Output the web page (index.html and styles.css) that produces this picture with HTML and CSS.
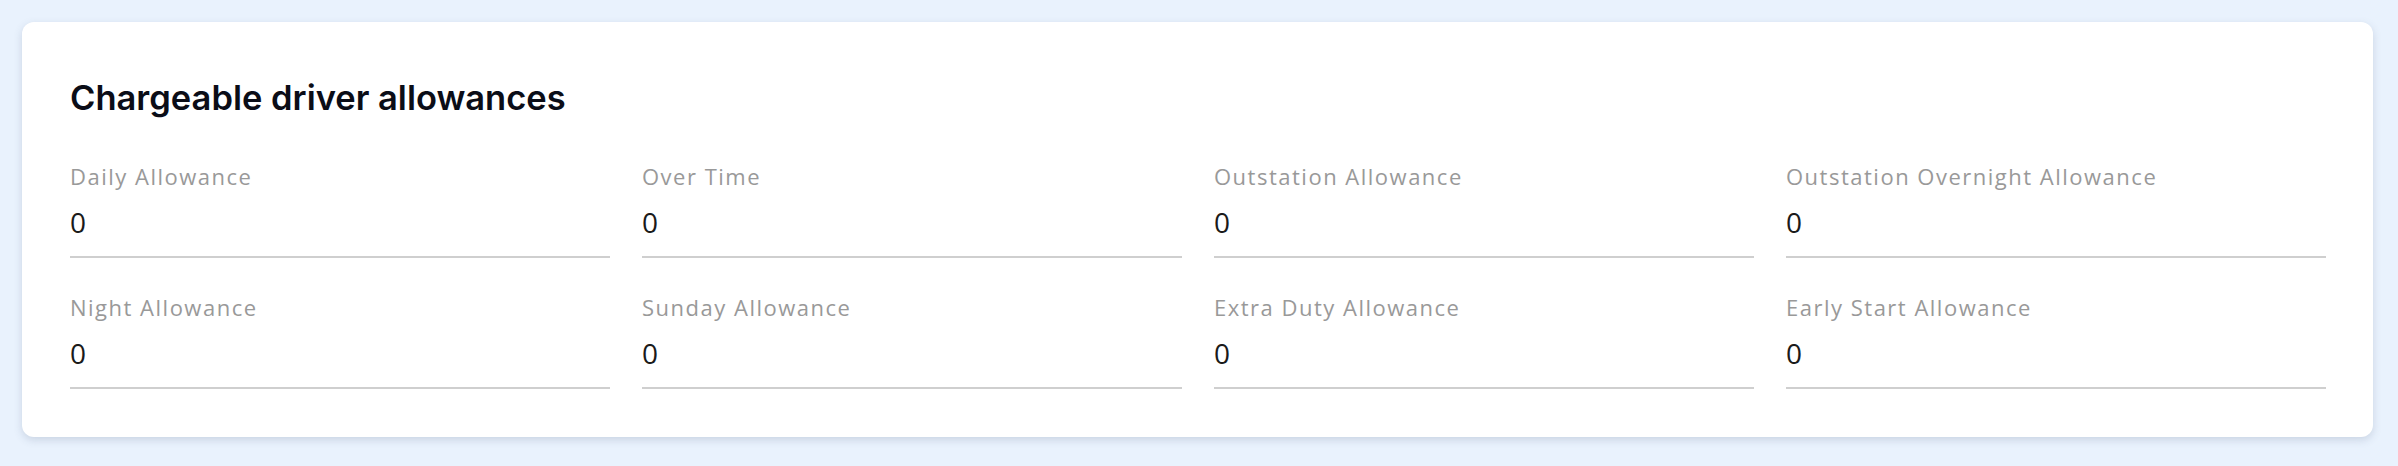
FILE: index.html
```html
<!DOCTYPE html>
<html lang="en">
<head>
    <meta charset="UTF-8">
    <meta name="viewport" content="width=device-width, initial-scale=1.0">
    <title>Chargeable driver allowances</title>
    <link rel="stylesheet" href="styles.css">
</head>
<body>
    <div class="card">
        <h2 class="card-title">Chargeable driver allowances</h2>

        <div class="fields">
            <div class="field">
                <div class="field-label">Daily Allowance</div>
                <div class="field-value">0</div>
            </div>
            <div class="field">
                <div class="field-label">Over Time</div>
                <div class="field-value">0</div>
            </div>
            <div class="field">
                <div class="field-label">Outstation Allowance</div>
                <div class="field-value">0</div>
            </div>
            <div class="field">
                <div class="field-label">Outstation Overnight Allowance</div>
                <div class="field-value">0</div>
            </div>
            <div class="field">
                <div class="field-label">Night Allowance</div>
                <div class="field-value">0</div>
            </div>
            <div class="field">
                <div class="field-label">Sunday Allowance</div>
                <div class="field-value">0</div>
            </div>
            <div class="field">
                <div class="field-label">Extra Duty Allowance</div>
                <div class="field-value">0</div>
            </div>
            <div class="field">
                <div class="field-label">Early Start Allowance</div>
                <div class="field-value">0</div>
            </div>
        </div>
    </div>
</body>
</html>
```

FILE: styles.css
```css
body {
    margin: 0;
    padding: 22px 25px 29px 22px;
    background: #e9f2fd;
    font-family: "Open Sans", Arial, sans-serif;
}
.card {
    background: white;
    border-radius: 12px;
    padding: 56px 47px 48px 48px;
    box-shadow: 0 3px 8px rgba(60, 80, 110, 0.18);
}
.card-title {
    margin: 0 0 46px;
    font-family: Inter, "Liberation Sans", sans-serif;
    font-size: 34.5px;
    line-height: 40px;
    font-weight: 600;
    color: #0b0d17;
}
.fields {
    display: grid;
    grid-template-columns: repeat(4, 1fr);
    column-gap: 32px;
    row-gap: 37px;
}
.field {
    border-bottom: 2px solid #cfcfcf;
}
.field-label {
    font-size: 22px;
    line-height: 24px;
    letter-spacing: 1.5px;
    color: #999;
}
.field-value {
    margin-top: 17px;
    padding-bottom: 17px;
    font-size: 28px;
    line-height: 34px;
    color: #1a1a1a;
}
```
